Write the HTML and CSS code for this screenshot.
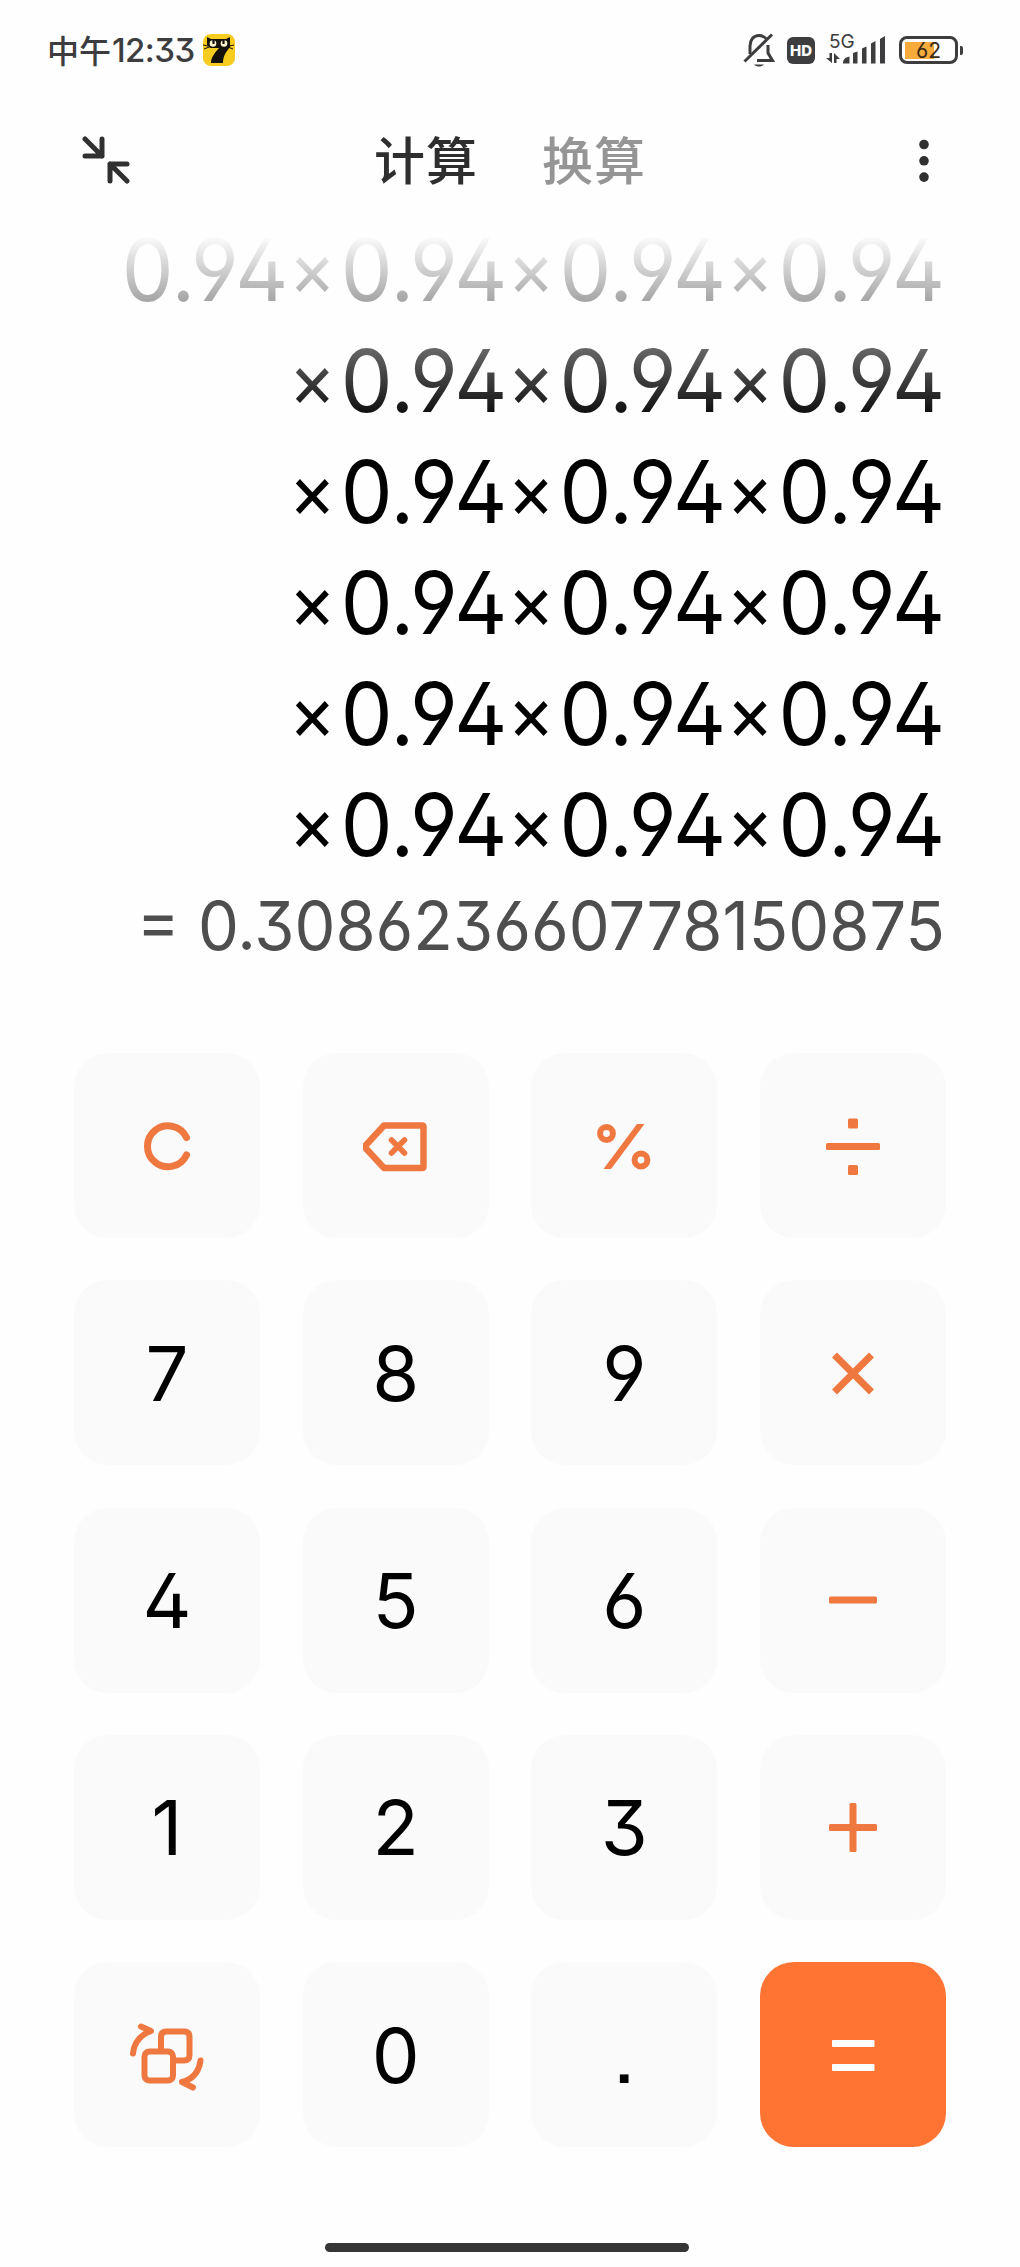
FILE: index.html
```html
<!DOCTYPE html>
<html lang="zh-CN">
<head>
  <meta charset="UTF-8">
  <title>计算</title>
  <link rel="stylesheet" href="styles.css">
</head>
<body>
  <div class="status-bar">
    <div class="status-left">
      <span class="clock-cjk">中午</span>
      <span class="clock">12:33</span>
      <svg class="app-icon" width="32" height="32" viewBox="0 0 32 32">
        <rect width="32" height="32" rx="8" fill="#f8cb1f"/>
        <path d="M4 3l4 2h15l4-2v10c-4 5-7 9-7 16H8c0-6 4-10 8-15H7l-3-3z" fill="#15120c"/>
        <path d="M0 11l5 1M1 15l5-2M31 11l-5 1M30 15l-5-2" stroke="#15120c" stroke-width="1"/>
        <circle cx="10" cy="9.500" r="3.300" fill="#fff6cf"/>
        <circle cx="21" cy="9.500" r="3.300" fill="#fff6cf"/>
        <path d="M10.500 6v4M20.500 6v4" stroke="#15120c" stroke-width="2.200"/>
      </svg>
    </div>
    <div class="status-right">
      <svg class="bell" width="32" height="34" viewBox="0 0 32 34" fill="none" stroke="#3d3d3f" stroke-width="3">
        <path d="M7 21V13C7 7 10.500 2.500 16 2.500c3 0 5 1 7 3M25 12v8l4.500 7.500H14"/>
        <path d="M1.500 28.500L29 1.500"/>
        <path d="M11 31.500c3 2.700 7 2.700 10 0z" fill="#3d3d3f" stroke="none"/>
      </svg>
      <span class="hd">HD</span>
      <div class="signal">
        <span class="network">5G</span>
        <svg width="60" height="30" viewBox="0 0 60 30" fill="#3d3d3f">
          <path d="M3.500 19H6v10L0 24h3.500zM8 29V19l6 6h-3.500v4z"/>
          <path d="M17 29.500c0-4 2-6 6.500-7v7zM27 19l4.500-1.500v12H27zM36 14.500l4.500-2v17H36zM45 9.500L49.500 7v22.500H45zM54 5l5-3v27.500h-5z"/>
        </svg>
      </div>
      <div class="battery"><span>62</span></div>
      <i class="battery-tip"></i>
    </div>
  </div>

  <div class="header">
    <svg class="shrink" width="48" height="48" viewBox="0 0 48 48" fill="none" stroke="#303030" stroke-width="5" stroke-linecap="round" stroke-linejoin="round">
      <path d="M3 3l17 17M20 3v17H3M45 45L28 28M28 45V28h17"/>
    </svg>
    <div class="tabs">
      <span class="tab active">计算</span>
      <span class="tab">换算</span>
    </div>
    <svg class="more" width="10" height="44" viewBox="0 0 10 44" fill="#303030">
      <circle cx="5" cy="6.500" r="4.800"/>
      <circle cx="5" cy="22.800" r="4.800"/>
      <circle cx="5" cy="39.100" r="4.800"/>
    </svg>
  </div>

  <div class="display">
    <div class="expression">
      <div class="line">0.94<span>×</span>0.94<span>×</span>0.94<span>×</span>0.94</div>
      <div class="line"><span>×</span>0.94<span>×</span>0.94<span>×</span>0.94</div>
      <div class="line"><span>×</span>0.94<span>×</span>0.94<span>×</span>0.94</div>
      <div class="line"><span>×</span>0.94<span>×</span>0.94<span>×</span>0.94</div>
      <div class="line"><span>×</span>0.94<span>×</span>0.94<span>×</span>0.94</div>
      <div class="line"><span>×</span>0.94<span>×</span>0.94<span>×</span>0.94</div>
    </div>
    <div class="result">= 0.308623660778150875</div>
  </div>

  <div class="keypad">
    <button class="key">
      <svg width="66" height="66" viewBox="0 0 66 66" stroke-width="7" stroke-linecap="round">
        <path d="M52.500 24.500A20.500 20.500 0 1 0 52.500 42"/>
      </svg>
    </button>
    <button class="key">
      <svg width="66" height="66" viewBox="0 0 66 66" stroke-width="6.500" stroke-linejoin="round" stroke-linecap="round">
        <path d="M21 12.500H59Q60.500 12.500 60.500 14V53.500Q60.500 55 59 55H21L3 35.500Q1.500 33.700 3 32z"/>
        <path d="M28.500 27l13 13M41.500 27l-13 13" stroke-width="5.500"/>
      </svg>
    </button>
    <button class="key">
      <svg width="66" height="66" viewBox="0 0 66 66" stroke-width="6">
        <circle cx="15.500" cy="20.500" r="6.400"/>
        <circle cx="50" cy="47" r="6.400"/>
        <path class="solid" d="M46 11H53.500L20 56H12.500z"/>
      </svg>
    </button>
    <button class="key">
      <svg class="solid" width="66" height="66" viewBox="0 0 66 66">
        <rect x="6" y="30" width="54" height="7" rx="1.500"/>
        <rect x="28" y="5.500" width="10" height="10" rx="1.500"/>
        <rect x="28" y="52" width="10" height="10" rx="1.500"/>
      </svg>
    </button>

    <button class="key">7</button>
    <button class="key">8</button>
    <button class="key">9</button>
    <button class="key">
      <svg width="66" height="66" viewBox="0 0 66 66" stroke-width="7">
        <path d="M14.500 15l37 37M51.500 15l-37 37"/>
      </svg>
    </button>

    <button class="key">4</button>
    <button class="key">5</button>
    <button class="key">6</button>
    <button class="key">
      <svg class="solid" width="66" height="66" viewBox="0 0 66 66">
        <rect x="9" y="29.500" width="48" height="7" rx="1.500"/>
      </svg>
    </button>

    <button class="key">1</button>
    <button class="key">2</button>
    <button class="key">3</button>
    <button class="key">
      <svg class="solid" width="66" height="66" viewBox="0 0 66 66">
        <rect x="9" y="30" width="48" height="7" rx="1.500"/>
        <rect x="29.500" y="9" width="7" height="49" rx="1.500"/>
      </svg>
    </button>

    <button class="key">
      <svg width="80" height="80" viewBox="0 0 80 80" stroke-width="6" stroke-linecap="round" stroke-linejoin="round">
        <rect x="17.500" y="36.500" width="28.500" height="29" rx="5"/>
        <path d="M34 36V22Q34 16.500 39.500 16.500H57Q62.500 16.500 62.500 22V40Q62.500 45.500 57 45.500H47"/>
        <path d="M6 38.500C7 28 12 20.500 24 16L14 11.500"/>
        <path d="M73.500 45.500C72 56 67 64 55 67L66 72.500"/>
      </svg>
    </button>
    <button class="key">0</button>
    <button class="key point">.</button>
    <button class="key equals">
      <svg class="solid" width="66" height="66" viewBox="0 0 66 66">
        <rect x="12" y="18" width="42.500" height="7" rx="1"/>
        <rect x="12" y="42" width="42.500" height="7" rx="1"/>
      </svg>
    </button>
  </div>

  <div class="home-bar"></div>
</body>
</html>
```
FILE: styles.css
```css
* {
  box-sizing: border-box;
}

body {
  margin: 0;
  width: 1020px;
  height: 2267px;
  overflow: hidden;
  background: #fefefe;
  color: #000;
  font-family: Inter, "Noto Sans CJK SC", sans-serif;
  font-feature-settings: "ss01", "cv09";
}

/* status bar */
.status-bar {
  height: 100px;
  padding: 0 57px 0 47px;
  display: flex;
  align-items: center;
  justify-content: space-between;
  color: #3d3d3f;
}

.status-left,
.status-right {
  display: flex;
  align-items: center;
}

.clock-cjk {
  margin-bottom: 3px;
  font-family: "Noto Sans CJK SC", sans-serif;
  font-size: 32px;
  font-weight: 500;
  line-height: 40px;
}

.clock {
  margin-left: 1px;
  width: 83px;
  font-size: 33px;
  font-weight: 500;
  line-height: 40px;
  letter-spacing: -0.6px;
}

.app-icon {
  margin-left: 8px;
}

.hd {
  width: 28px;
  height: 27px;
  margin-left: 12px;
  border-radius: 6px;
  background: #3d3d3f;
  color: #fff;
  font-size: 15px;
  font-weight: 800;
  line-height: 27px;
  text-align: center;
}

.signal {
  width: 60px;
  height: 32px;
  margin-left: 11px;
  display: grid;
}

.signal > * {
  grid-area: 1 / 1;
}

.network {
  margin-left: 3px;
  font-size: 19px;
  line-height: 16px;
}

.battery {
  width: 59px;
  height: 28px;
  margin-left: 13px;
  border: 3px solid #3d3d3f;
  border-radius: 8px;
  padding: 3px;
  color: #3a2a18;
  font-size: 21px;
  line-height: 17px;
  text-align: center;
}

.battery span {
  display: block;
  background: linear-gradient(to right, #f7ab3b 29px, transparent 29px);
}

.battery-tip {
  width: 3px;
  height: 9px;
  margin-left: 2px;
  border-radius: 0 2px 2px 0;
  background: #3d3d3f;
}

/* header */
.header {
  height: 120px;
  padding: 0 91px 0 82px;
  display: flex;
  align-items: center;
  justify-content: space-between;
}

.tabs {
  margin: 0 29px 4px 0;
  display: flex;
  gap: 64px;
}

.tab {
  color: #959595;
  font-family: "Noto Sans CJK SC", sans-serif;
  font-size: 51px;
  font-weight: 500;
  line-height: 76px;
  letter-spacing: 1px;
}

.tab.active {
  color: #2e2e2e;
}

/* display */
.display {
  height: 833px;
  padding-right: 75px;
  text-align: right;
  white-space: nowrap;
}

.expression {
  display: flow-root;
  height: 663px;
  font-size: 87px;
  line-height: 111px;
  -webkit-mask-image: linear-gradient(to bottom, transparent 15px, #000 205px);
  mask-image: linear-gradient(to bottom, transparent 15px, #000 205px);
}

.line {
  height: 111px;
  transform: scaleX(0.945);
  transform-origin: right;
}

.line:first-child {
  margin-top: -6px;
}

.line span {
  padding-right: 5px;
  font-size: 76px;
  line-height: 1;
  vertical-align: 5px;
}

.result {
  color: #4e4e4e;
  font-size: 67px;
  line-height: 86px;
  transform: scaleX(0.969);
  transform-origin: right;
}

/* keypad */
.keypad {
  padding: 0 74px;
  display: grid;
  grid-template-columns: repeat(4, 186px);
  grid-auto-rows: 185px;
  justify-content: space-between;
  row-gap: 42.3px;
}

.key {
  padding: 0;
  border: none;
  border-radius: 34px;
  background: #fafafa;
  color: #000;
  display: flex;
  align-items: center;
  justify-content: center;
  font-family: inherit;
  font-feature-settings: inherit;
  font-size: 76px;
}

.key svg {
  fill: none;
  stroke: #ef7840;
}

.key .solid {
  fill: #ef7840;
  stroke: none;
}

/* square decimal point */
.key.point {
  font-feature-settings: "ss07";
}

.key.equals {
  background: #ff7433;
}

.key.equals .solid {
  fill: #fff;
}

.home-bar {
  width: 364px;
  height: 9px;
  margin: 96px 0 0 325px;
  border-radius: 5px;
  background: #363636;
}
```
